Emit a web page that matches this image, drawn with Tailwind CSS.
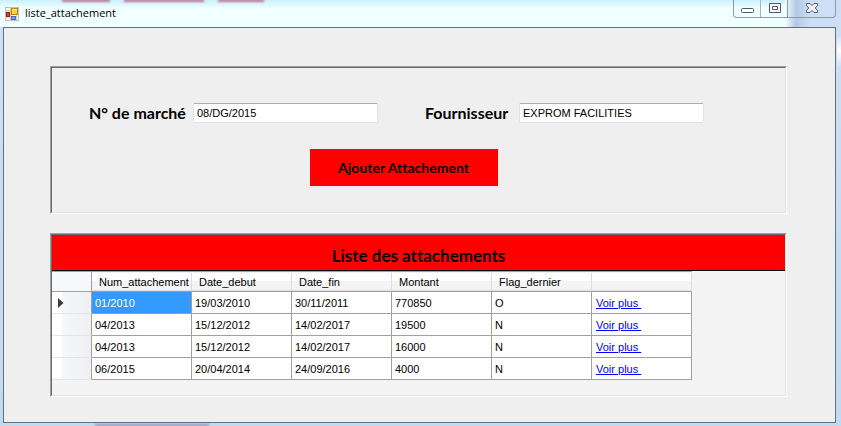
<!DOCTYPE html>
<html lang="fr">
<head>
  <meta charset="UTF-8" />
  <meta name="viewport" content="width=device-width, initial-scale=1.0" />
  <title>liste_attachement</title>
  <script src="https://cdn.jsdelivr.net/npm/@tailwindcss/browser@4"></script>
</head>
<body class="min-h-screen flex flex-col bg-[#c6dcf4] font-['Liberation_Sans',sans-serif] text-[11px] text-black">

  <!-- Title bar -->
  <header class="relative h-[27px] flex items-start justify-between pl-[5px] pr-[5px] overflow-hidden bg-linear-to-b from-[#c8f0ff] from-0% to-[#f0ffff] to-30%">
    <div class="absolute inset-y-0 right-0 w-[56px] bg-linear-to-r from-[#f0ffff] from-0% via-[#b4c8e4] via-20% to-[#cddff5] to-45%"></div>
    <div class="absolute -top-px left-[62px] flex gap-[14px] blur-[1px]">
      <span class="w-[48px] h-[3px] bg-[#bc7c94]"></span>
      <span class="w-[80px] h-[3px] bg-[#bc7c94]"></span>
      <span class="w-[46px] h-[3px] bg-[#bc7c94]"></span>
    </div>
    <div class="relative flex items-center gap-[6px] pt-[5px]">
      <svg class="w-[14px] h-[15px]" viewBox="0 0 14 15">
        <rect x="0.5" y="1.500" width="13" height="13" fill="#fff" stroke="#bdbdbd" />
        <path d="M5.500 1v14M0 4.500h6M0 11h6M11.500 9v5" stroke="#c8c8c8" />
        <rect x="6.500" y="2.500" width="6" height="6" fill="#fcd13c" stroke="#b8860b" />
        <path d="M7 3.500h5" stroke="#fff0b0" />
        <rect x="1.500" y="6.500" width="3" height="4" fill="#d84030" stroke="#a01810" />
        <rect x="6.500" y="10.500" width="4" height="3" fill="#6ea0ee" stroke="#3c6cc8" />
      </svg>
      <h1 class="font-['Open_Sans',sans-serif] text-[11px] leading-4">liste_attachement</h1>
    </div>
    <div class="relative flex h-[18px] border border-t-0 border-[#8e9aa6] rounded-b-[4px] overflow-hidden">
      <button type="button" aria-label="Réduire" class="w-[27px] flex justify-center border-r border-[#a8b4bc]">
        <svg class="w-[13px] h-[17px]" viewBox="0 0 13 17"><rect x="0.500" y="8.500" width="12" height="4" rx="1" fill="#fff" stroke="#53576b" /></svg>
      </button>
      <button type="button" aria-label="Agrandir" class="w-[27px] flex justify-center border-r border-[#8e9aa6]">
        <svg class="w-[13px] h-[17px]" viewBox="0 0 13 17"><path d="M1.500 3.500h11v9h-11zM4.500 6.500v3h5v-3z" fill="#fafafc" fill-rule="evenodd" stroke="#53576b" stroke-linejoin="round" /></svg>
      </button>
      <button type="button" aria-label="Fermer" class="w-[47px] flex justify-center">
        <svg class="w-[13px] h-[17px]" viewBox="0 0 13 17"><path d="M1.500 3.500h3.500l2 2 2-2h3.500v2L10.200 8l2.300 2.500v2H9l-2-2-2 2H1.500v-2L3.800 8 1.500 5.500z" fill="#f0f0f6" stroke="#53576b" stroke-linejoin="round" /></svg>
      </button>
    </div>
  </header>

  <div class="relative flex-1 flex flex-col pl-[3px] pr-[5px] pb-[3px] bg-linear-to-b from-[#cddff5] to-[#c0daf2]">
    <div class="absolute top-2 right-0 w-[4px] h-8 bg-linear-to-b from-[#cddff5] via-white to-[#cddff5]"></div>
    <div class="absolute bottom-0 left-[95px] w-[114px] h-[2px] bg-[#8296b4] blur-[1px]"></div>
    <main class="relative flex-1 flex flex-col gap-[19px] pt-[38px] pl-[46px] pr-[48px] pb-[25px] bg-[#efefef] border border-[#66707a]">

      <!-- Search form -->
      <section class="border border-t-[#a0a0a0] border-l-[#a0a0a0] border-b-white border-r-white">
        <form class="flex flex-col gap-[26px] pt-[35px] pb-[26px] border border-t-[#696969] border-l-[#696969] border-b-[#e3e3e3] border-r-[#e3e3e3]">
          <div class="flex items-center pl-[37px] gap-[47px]">
            <div class="flex items-center gap-[10px]">
              <label for="marche" class="w-[94px] whitespace-nowrap font-['Lato',sans-serif] font-bold text-[16px] leading-5">N° de marché</label>
              <input id="marche" type="text" value="08/DG/2015" class="w-[185px] h-5 px-[3px] bg-white border border-[#e2e3ea] border-t-[#abadb3] rounded-[2px]" />
            </div>
            <div class="flex items-center gap-[10px]">
              <label for="fournisseur" class="w-[84px] whitespace-nowrap font-['Lato',sans-serif] font-bold text-[16px] leading-5">Fournisseur</label>
              <input id="fournisseur" type="text" value="EXPROM FACILITIES" class="w-[185px] h-5 px-[3px] bg-white border border-[#e2e3ea] border-t-[#abadb3] rounded-[2px]" />
            </div>
          </div>
          <div class="flex justify-center pr-[30px]">
            <button type="button" class="w-[188px] h-[37px] bg-[#ff0000] font-['Lato',sans-serif] font-bold text-[14px] [font-variant-ligatures:none]">Ajouter Attachement</button>
          </div>
        </form>
      </section>

      <!-- List -->
      <section class="border border-t-[#a0a0a0] border-l-[#a0a0a0] border-b-white border-r-white">
        <div class="pb-[15px] bg-[#f4f4f4] border border-t-[#696969] border-l-[#696969] border-b-[#e3e3e3] border-r-[#e3e3e3]">
          <h2 class="h-9 pt-[9px] bg-[#ff0000] border-b border-black text-center font-['Lato',sans-serif] font-bold text-[17px] leading-6 [font-variant-ligatures:none]">Liste des attachements</h2>
          <table class="w-[640px] table-fixed border-separate border-spacing-0 text-left">
            <thead>
              <tr class="h-[21px] *:p-0 *:border-t *:border-b *:border-[#a0a0a0] *:font-normal">
                <th class="w-10 bg-[#f7f8fa] border-r"></th>
                <th class="w-[100px]"><div class="h-[18px] pl-[7px] leading-[18px] border-r border-b border-[#dcdcdc] bg-linear-to-b from-white from-45% to-[#f3f4f6] to-50%">Num_attachement</div></th>
                <th class="w-[100px]"><div class="h-[18px] pl-[7px] leading-[18px] border-r border-b border-[#dcdcdc] bg-linear-to-b from-white from-45% to-[#f3f4f6] to-50%">Date_debut</div></th>
                <th class="w-[100px]"><div class="h-[18px] pl-[7px] leading-[18px] border-r border-b border-[#dcdcdc] bg-linear-to-b from-white from-45% to-[#f3f4f6] to-50%">Date_fin</div></th>
                <th class="w-[100px]"><div class="h-[18px] pl-[7px] leading-[18px] border-r border-b border-[#dcdcdc] bg-linear-to-b from-white from-45% to-[#f3f4f6] to-50%">Montant</div></th>
                <th class="w-[100px]"><div class="h-[18px] pl-[7px] leading-[18px] border-r border-b border-[#dcdcdc] bg-linear-to-b from-white from-45% to-[#f3f4f6] to-50%">Flag_dernier</div></th>
                <th class="w-[100px]"><div class="h-[18px] border-r border-b border-[#dcdcdc] bg-linear-to-b from-white from-45% to-[#f3f4f6] to-50%"></div></th>
              </tr>
            </thead>
            <tbody id="rows">
              <!-- Rows inserted below -->
            </tbody>
          </table>
        </div>
      </section>
    </main>
  </div>

  <script>
    const attachements = [
      ['01/2010', '19/03/2010', '30/11/2011', '770850', 'O'],
      ['04/2013', '15/12/2012', '14/02/2017', '19500', 'N'],
      ['04/2013', '15/12/2012', '14/02/2017', '16000', 'N'],
      ['06/2015', '20/04/2014', '24/09/2016', '4000', 'N']
    ];

    const tbody = document.getElementById('rows');
    attachements.forEach((item, i) => {
      const row = document.createElement('tr');
      row.className = 'h-[22px]';
      const arrow = i === 0
        ? '<svg class="ml-[6px] w-[6px] h-[10px]" viewBox="0 0 6 10"><path d="M0 0l5.500 5L0 10z" fill="#3c3c3c" /></svg>'
        : '';
      const cells = item.map((value, j) => {
        const color = i === 0 && j === 0 ? 'bg-[#3399ff] text-white' : 'bg-white';
        return `<td class="pt-px pb-0 px-[3px] border-r border-b border-[#a0a0a0] ${color}">${value}</td>`;
      }).join('');
      row.innerHTML = `
        <td class="p-0 border-r border-r-[#a0a0a0] border-b border-b-[#e4e5e8] bg-linear-to-r from-white from-25% via-[#f6f7f9] via-25% to-[#eff0f3]">${arrow}</td>
        ${cells}
        <td class="pt-px pb-0 px-1 border-r border-b border-[#a0a0a0] bg-white"><a href="#" class="text-[#0000ff] underline underline-offset-1 whitespace-pre">Voir plus </a></td>`;
      tbody.appendChild(row);
    });
  </script>
</body>
</html>
